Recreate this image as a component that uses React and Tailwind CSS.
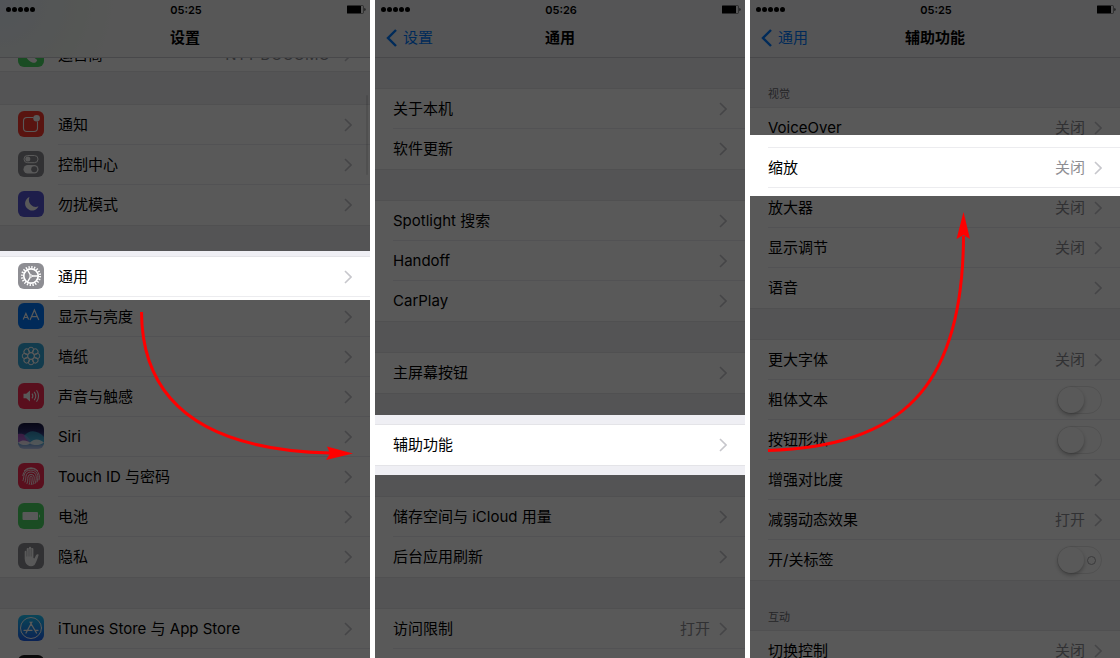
import React from "react";

const fill = "fill-white";

const APP_ICONS = {
  notify: {
    bg: "bg-[#ff3b30]",
    art: (
      <>
        <path d="M15.500 6.500H9A3.500 3.500 0 0 0 5.500 10v7A3.500 3.500 0 0 0 9 20.500h7A3.500 3.500 0 0 0 19.500 17v-6.500" className="fill-none stroke-white" strokeWidth="1.100" />
        <circle cx="18.600" cy="7.300" r="3.300" className={fill} />
      </>
    ),
  },
  control: {
    bg: "bg-[#8e8e93]",
    art: (
      <>
        <rect x="6" y="4.500" width="14" height="7.200" rx="3.600" className="fill-none stroke-white" strokeWidth="1" />
        <circle cx="9.800" cy="8.100" r="2.500" className={fill} />
        <rect x="5.500" y="14" width="15" height="8.500" rx="4.250" className={fill} />
        <circle cx="16.200" cy="18.250" r="3" className="fill-[#8e8e93]" />
      </>
    ),
  },
  moon: {
    bg: "bg-[#5856d6]",
    art: <path d="M11.500 6a7 7 0 1 0 9 9.300A7 7 0 0 1 11.500 6Z" className={fill} />,
  },
  gear: {
    bg: "bg-[#8e8e93]",
    art: (
      <g className="fill-none stroke-white">
        <circle cx="13" cy="13" r="9" strokeWidth="2.200" strokeDasharray="1.300 1.527" />
        <circle cx="13" cy="13" r="7.200" strokeWidth="1.700" />
        <circle cx="13" cy="13" r="1.200" strokeWidth="1" />
        <path d="M14 13h6.500M12.300 11.900 9.300 6.600M12.300 14.100 9.300 19.400" strokeWidth="1.300" />
      </g>
    ),
  },
  display: {
    bg: "bg-[#007aff]",
    art: (
      <g className="fill-none stroke-white" strokeWidth="1.200">
        <path d="m5.200 16.500 2.700-6 2.700 6M6.200 14.500h3.400" />
        <path d="m12 17 4.400-10 4.400 10M13.500 13.700h5.800" />
      </g>
    ),
  },
  wallpaper: {
    bg: "bg-[#36aadc]",
    art: (
      <g className="fill-none stroke-white" strokeWidth="1">
        {[0, 45, 90, 135, 180, 225, 270, 315].map((a) => (
          <circle key={a} cx="13" cy="6.900" r="2.700" transform={`rotate(${a} 13 13)`} />
        ))}
        <circle cx="13" cy="13" r="3.300" />
      </g>
    ),
  },
  sound: {
    bg: "bg-[#ff2d55]",
    art: (
      <>
        <path d="M5.500 10.800h2.700L12 7.500v11l-3.800-3.300H5.500Z" className={fill} />
        <path d="M14 10.600a4 4 0 0 1 0 4.800M16.200 8.800a7 7 0 0 1 0 8.400M18.500 7.200a10 10 0 0 1 0 11.600" className="fill-none stroke-white" strokeWidth="1.100" />
      </>
    ),
  },
  siri: {
    bg: "bg-[linear-gradient(180deg,#14143c_0%,#2c2c6e_35%,#4c8ed0_70%,#c4d0f4_100%)]",
    art: (
      <>
        <path d="M0 11c5-1 9 1 13 7-5 4-9 4-13 1Z" className="fill-[#d85bd8]" opacity="0.700" />
        <path d="M6 13c5-7 14-6 20 1v7c-8 3-15 0-20-8Z" className="fill-[#3ccbe8]" opacity="0.600" />
        <path d="M0 19.500c5-3.500 9-2 12 0 4-4 9-4 14 0-5 3.500-10 3-14 1-3 2-8 2.500-12-1Z" className={fill} opacity="0.850" />
      </>
    ),
  },
  touch: {
    bg: "bg-[#ff2d55]",
    art: (
      <g className="fill-none stroke-white" strokeWidth="0.900" strokeLinecap="round">
        <path d="M6.300 7.600a9 9 0 0 1 13.400 0M4.700 12.500a8.400 8.400 0 0 1 16.600 0c.2 1.500.2 3-.3 4.500" />
        <path d="M5 17.500c.8-2 .6-3.500 1-5a7.100 7.100 0 0 1 13.800 0c.2 2.500 0 4.500-.8 6.500" />
        <path d="M7 19c1-2.500.6-4 .9-5.500a5.200 5.200 0 0 1 10.300 0c.2 2.500-.2 5-1.200 7" />
        <path d="M9 20.500c1-2.500.7-4.500.9-6.500a3.200 3.200 0 0 1 6.300 0c.1 2.500-.3 5-1.200 7.300M11.300 21.300c.8-2.500.6-5 .7-7a1.100 1.100 0 0 1 2.200 0c0 2.500-.2 5-.9 7.300" />
      </g>
    ),
  },
  battery: {
    bg: "bg-[#4cd964]",
    art: (
      <>
        <rect x="4.500" y="9" width="15.500" height="8" rx="1" className={fill} />
        <path d="M21 11.300c1.300.4 1.300 3 0 3.400Z" className={fill} />
      </>
    ),
  },
  hand: {
    bg: "bg-[#8e8e93]",
    art: (
      <>
        <path d="M9.500 22c-2-1.500-2.700-4-2.800-6.500V8.800a1 1 0 0 1 2 0V6a1 1 0 0 1 2.200 0V4.900a1.100 1.100 0 0 1 2.300 0V6a1.050 1.050 0 0 1 2.200 0v9l1 .5 1.600-3.300c.6-1.100 2.800-1.200 2.600-.2-1 3-2 7-4.100 10a6 6 0 0 1-7 0Z" className={fill} />
        <path d="M8.800 8v5.500M11 6v7.500M13.200 6v7.500" className="stroke-[#8e8e93]" strokeWidth="0.500" />
      </>
    ),
  },
  store: {
    bg: "bg-[linear-gradient(180deg,#1fc8fb,#1d62f0)]",
    art: (
      <g className="fill-none stroke-white" strokeWidth="1.300" strokeLinecap="round">
        <circle cx="13" cy="13" r="10.500" strokeWidth="1" />
        <path d="m14 7-6 11M12 7l6.500 11M6 15.300h8M17 15.300h3" />
      </g>
    ),
  },
  wallet: { bg: "bg-[#1c1c1e]", art: null },
  carrier: {
    bg: "bg-[#4cd964]",
    art: <path d="M12 15.500c1-1 2-.8 2.700 0l4.500 3.500c-.8 2.700-3 3.300-5 2.500-3-1.300-6-4-7-8Z" className={fill} />,
  },
};

function AppIcon({ name }) {
  const { bg, art } = APP_ICONS[name];
  return (
    <span className={`mb-[2px] h-[26px] w-[26px] shrink-0 overflow-hidden rounded-md ${bg}`}>
      <svg viewBox="0 0 26 26" className="block h-full w-full" aria-hidden="true">
        {art}
      </svg>
    </span>
  );
}

function Chevron() {
  return (
    <svg viewBox="0 0 8 14" className="h-[14px] w-2 shrink-0 fill-none stroke-[#c7c7cc]" strokeWidth="1.600" aria-hidden="true">
      <path d="m1 1 6 6-6 6" />
    </svg>
  );
}

function Toggle({ id, mark }) {
  return (
    <span className="relative flex h-7 w-[45px] shrink-0">
      <input
        id={id}
        type="checkbox"
        className="h-7 w-[45px] appearance-none rounded-full border border-[#e5e5e5] bg-white before:block before:h-[26px] before:w-[26px] before:rounded-full before:bg-white before:shadow-[0_2px_4px_rgba(0,0,0,0.3)]"
      />
      {mark && <span className="pointer-events-none absolute top-[10px] right-[6px] h-[9px] w-[9px] rounded-full border border-[#a6a6aa]" />}
    </span>
  );
}

function Row({ label, icon, value, toggle, mark, last }) {
  const line = last ? "" : "border-b border-[#ececef]";
  if (!label) {
    return <li className="flex h-10 items-center pl-[18px]">{icon && <AppIcon name={icon} />}</li>;
  }
  if (toggle) {
    return (
      <li className="pl-[18px]">
        <div className={`flex h-10 items-center justify-between pr-[18px] ${line}`}>
          <label htmlFor={label}>{label}</label>
          <Toggle id={label} mark={mark} />
        </div>
      </li>
    );
  }
  return (
    <li>
      <a href="#" className="flex h-10 items-center gap-[14px] pl-[18px]">
        {icon && <AppIcon name={icon} />}
        <span className={`flex h-10 flex-1 items-center gap-[9px] pr-[18px] ${line}`}>
          <span className="flex-1 whitespace-nowrap">{label}</span>
          {value && <span className="text-[#8e8e93]">{value}</span>}
          <Chevron />
        </span>
      </a>
    </li>
  );
}

function Group({ rows }) {
  return (
    <ul className="shrink-0 border-y border-[#e4e4e8] bg-white">
      {rows.map((row, i) => (
        <Row key={i} {...row} last={i === rows.length - 1} />
      ))}
    </ul>
  );
}

function Caption({ children }) {
  return <h2 className="flex h-[49px] shrink-0 items-end px-[18px] pb-1 text-[11px] leading-[18px] text-[#6d6d72]">{children}</h2>;
}

function StatusBar({ time }) {
  return (
    <div className="grid h-[19px] grid-cols-3 items-center pr-1 pl-[6px]">
      <span className="flex gap-[1px]">
        {[0, 1, 2, 3, 4].map((n) => (
          <span key={n} className="h-[5px] w-[5px] rounded-full bg-black" />
        ))}
      </span>
      <span className="text-center text-[11px] leading-4 font-semibold">{time}</span>
      <svg viewBox="0 0 19 9" className="h-[9px] w-[19px] justify-self-end" aria-hidden="true">
        <rect x="0" y="0.500" width="14" height="8" rx="0.500" />
        <path d="M14 .5h1.500q1 0 1 1v6q0 1-1 1H14" className="fill-none stroke-black" strokeWidth="0.400" />
        <path d="M17.500 3c1.300.4 1.300 2.600 0 3Z" />
      </svg>
    </div>
  );
}

function Screen({ title, back, time, navTint, top, clear, children }) {
  return (
    <section className="relative flex min-w-0 flex-col overflow-hidden bg-[#efeff4] text-[15px] leading-5">
      <header className={`h-[58px] shrink-0 border-b border-[#cfcfd4] ${navTint}`}>
        <StatusBar time={time} />
        <div className="grid h-[38px] grid-cols-[1fr_auto_1fr] items-center px-[11px]">
          {back ? (
            <a href="#" className="flex items-center gap-[6px] text-[#007aff]">
              <svg viewBox="0 0 11 18" className="h-[18px] w-[11px] fill-none stroke-[#007aff]" strokeWidth="2.400" aria-hidden="true">
                <path d="M10 1 2 9l8 8" />
              </svg>
              {back}
            </a>
          ) : (
            <span />
          )}
          <h1 className="font-semibold">{title}</h1>
        </div>
      </header>
      {children}
      <div className="pointer-events-none absolute inset-0 flex flex-col">
        <div className={`bg-black/65 ${top}`} />
        <div className={clear} />
        <div className="flex-1 bg-black/65" />
      </div>
    </section>
  );
}

export default function App() {
  return (
    <main className="relative grid h-screen grid-cols-3 gap-[5px] overflow-hidden bg-white font-[Inter,'Noto_Sans_CJK_SC',sans-serif] text-black">
      <Screen title="设置" time="05:25" navTint="bg-[radial-gradient(circle_at_0_0,#e9f0fc,#f3f8f3_80px,#f9f9f9_120px)]" top="h-[251px]" clear="h-[49px]">
        <div className="flex h-[14px] shrink-0 items-end overflow-hidden border-b border-[#e4e4e8] bg-white">
          <a href="#" className="flex h-10 flex-1 items-center gap-[14px] px-[18px] pt-2">
            <AppIcon name="carrier" />
            <span className="flex-1">运营商</span>
            <span className="text-[#8e8e93]">NTT DOCOMO</span>
            <Chevron />
          </a>
        </div>
        <div className="flex flex-col gap-[30px] pt-8">
          <Group
            rows={[
              { label: "通知", icon: "notify" },
              { label: "控制中心", icon: "control" },
              { label: "勿扰模式", icon: "moon" },
            ]}
          />
          <Group
            rows={[
              { label: "通用", icon: "gear" },
              { label: "显示与亮度", icon: "display" },
              { label: "墙纸", icon: "wallpaper" },
              { label: "声音与触感", icon: "sound" },
              { label: "Siri", icon: "siri" },
              { label: "Touch ID 与密码", icon: "touch" },
              { label: "电池", icon: "battery" },
              { label: "隐私", icon: "hand" },
            ]}
          />
          <Group rows={[{ label: "iTunes Store 与 App Store", icon: "store" }, { icon: "wallet" }]} />
        </div>
        <span className="absolute top-[95px] right-[2px] h-20 w-[2px] rounded-full bg-black/10" />
      </Screen>

      <Screen title="通用" back="设置" time="05:26" navTint="bg-[#f2f2f6]" top="h-[415px]" clear="h-[60px]">
        <div className="flex flex-col gap-[30px] pt-[30px]">
          <Group rows={[{ label: "关于本机" }, { label: "软件更新" }]} />
          <Group rows={[{ label: "Spotlight 搜索" }, { label: "Handoff" }, { label: "CarPlay" }]} />
          <Group rows={[{ label: "主屏幕按钮" }]} />
          <Group rows={[{ label: "辅助功能" }]} />
          <Group rows={[{ label: "储存空间与 iCloud 用量" }, { label: "后台应用刷新" }]} />
          <Group rows={[{ label: "访问限制", value: "打开" }, {}]} />
        </div>
      </Screen>

      <Screen title="辅助功能" back="通用" time="05:25" navTint="bg-[#f2f2f6]" top="h-[135px]" clear="h-[61px]">
        <Caption>视觉</Caption>
        <Group
          rows={[
            { label: "VoiceOver", value: "关闭" },
            { label: "缩放", value: "关闭" },
            { label: "放大器", value: "关闭" },
            { label: "显示调节", value: "关闭" },
            { label: "语音" },
          ]}
        />
        <div className="h-[30px] shrink-0" />
        <Group
          rows={[
            { label: "更大字体", value: "关闭" },
            { label: "粗体文本", toggle: true },
            { label: "按钮形状", toggle: true },
            { label: "增强对比度" },
            { label: "减弱动态效果", value: "打开" },
            { label: "开/关标签", toggle: true, mark: true },
          ]}
        />
        <Caption>互动</Caption>
        <Group rows={[{ label: "切换控制", value: "关闭" }]} />
      </Screen>

      <svg viewBox="0 0 1120 658" className="pointer-events-none absolute inset-0 h-full w-full" aria-hidden="true">
        <g className="fill-none stroke-[#ff0000]" strokeWidth="3">
          <path d="M141.500 312C142 402 203 450 330 453" />
          <path d="M768 450.500C900 446 963 390 963.500 236" />
        </g>
        <g className="fill-[#ff0000]">
          <path d="m353 453.500-27 6.500 4-6.500-3-7Z" />
          <path d="m963.500 212 6.500 27-6.500-4-7 4Z" />
        </g>
      </svg>
    </main>
  );
}
